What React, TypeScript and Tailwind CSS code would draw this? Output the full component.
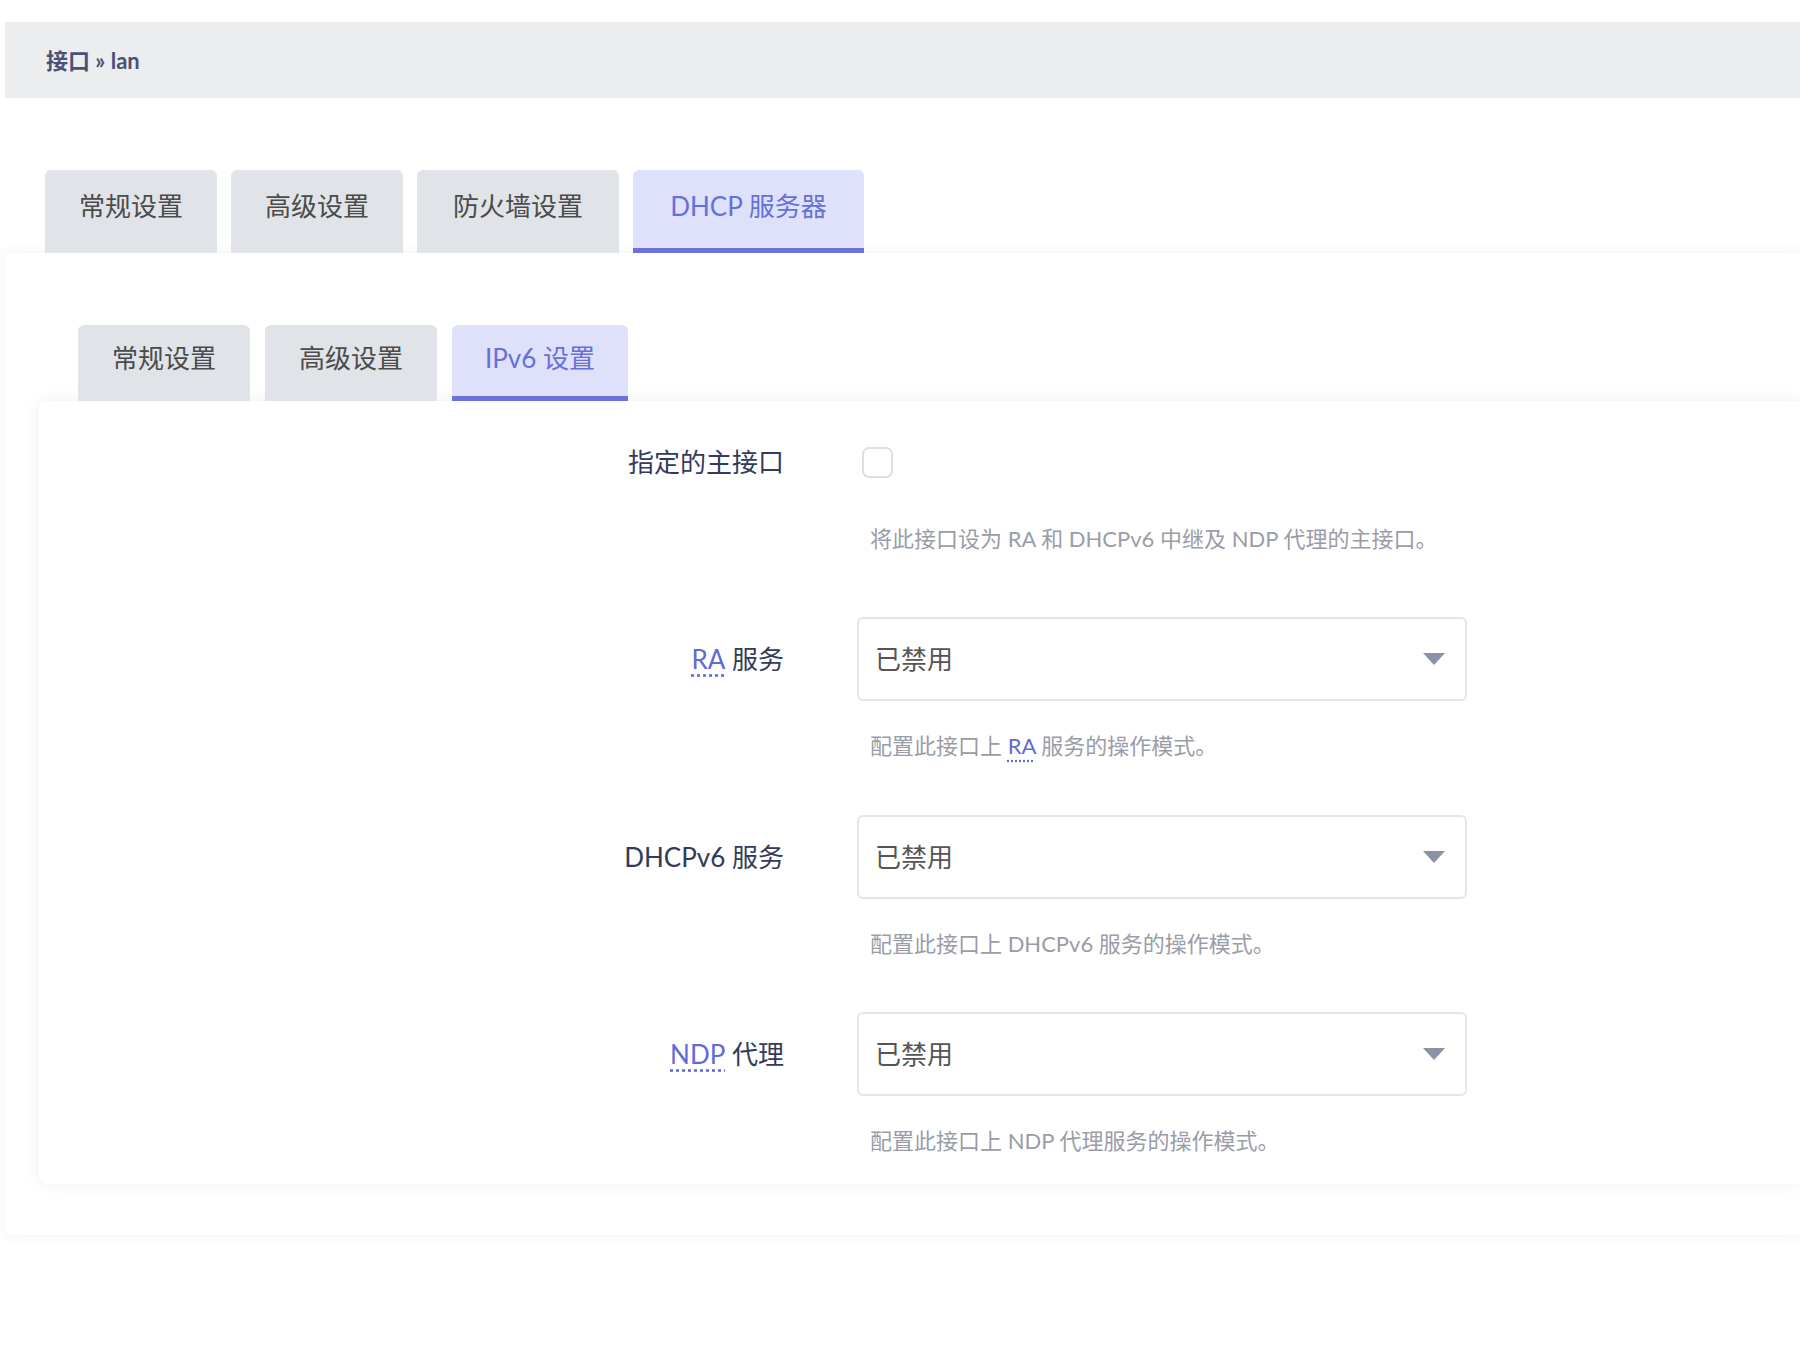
import { ReactNode } from "react"

const font = { fontFamily: '"Lato", "Noto Sans CJK SC", sans-serif' }

function Tab({ label, active, w }: { label: string; active?: boolean; w: string }) {
  return (
    <div
      className={`${w} h-full rounded-t-[6px] flex items-center justify-center text-[26px] ${
        active ? "bg-[#dfe1fb] text-[#6670d9] border-b-[5px] border-[#6b73db] pt-[5px]" : "bg-[#e0e3e8] text-[#4b4b4b]"
      }`}
    >
      <span className="-mt-[10px]">{label}</span>
    </div>
  )
}

function Abbr({ children }: { children: ReactNode }) {
  return (
    <span className="text-[#5f6bd6] underline decoration-dotted decoration-[#5f6bd6] underline-offset-[6px]">
      {children}
    </span>
  )
}

function Select() {
  return (
    <div className="w-[610px] h-[84px] border-2 border-[#e3e5ea] rounded-[6px] flex items-center justify-between pl-[16px] pr-[20px] text-[26px] text-[#555]">
      <span>已禁用</span>
      <svg width="22" height="12" viewBox="0 0 22 12">
        <path d="M0 0 L22 0 L11 12 Z" fill="#8a93a5" />
      </svg>
    </div>
  )
}

function Row({ label, children, desc, h }: { label: ReactNode; children: ReactNode; desc: ReactNode; h: string }) {
  return (
    <div className={`flex ${h}`}>
      <div className="w-[745px] pr-0 text-right text-[26px] text-[#333a5a] h-[84px] flex items-center justify-end">
        {label}
      </div>
      <div className="ml-[73px]">
        <div className="h-[84px] flex items-center">{children}</div>
        <div className="text-[22px] text-[#9a9ca8] pl-[13px] mt-[28px]">{desc}</div>
      </div>
    </div>
  )
}

export default function App() {
  return (
    <div style={font} className="w-[1800px] h-[1362px] bg-white overflow-hidden pt-[22px] pl-[5px]">
      <div className="h-[76px] bg-[#ebedef] flex items-center pl-[41px] text-[22px] font-bold text-[#4a5175]">
        接口 » lan
      </div>
      <div className="h-[83px] mt-[72px] pl-[40px] flex gap-[14px]">
        <Tab label="常规设置" w="w-[172px]" />
        <Tab label="高级设置" w="w-[172px]" />
        <Tab label="防火墙设置" w="w-[202px]" />
        <Tab label="DHCP 服务器" active w="w-[231px]" />
      </div>
      <div className="h-[982px] rounded-l-[8px] bg-white shadow-[0_0_16px_rgba(0,0,0,0.06)] pt-[72px] pl-[34px]">
        <div className="h-[76px] pl-[39px] flex gap-[15px]">
          <Tab label="常规设置" w="w-[172px]" />
          <Tab label="高级设置" w="w-[172px]" />
          <Tab label="IPv6 设置" active w="w-[176px]" />
        </div>
        <div className="h-[783px] rounded-l-[8px] bg-white shadow-[0_0_16px_rgba(0,0,0,0.07)] pt-[6px]">
          <div className="flex h-[210px]">
            <div className="w-[745px] text-right text-[26px] text-[#333a5a] h-[110px] flex items-center justify-end">
              指定的主接口
            </div>
            <div className="ml-[78px]">
              <div className="h-[110px] flex items-center">
                <div className="w-[31px] h-[31px] rounded-[7px] border-2 border-[#dcdfe5]" />
              </div>
              <div className="text-[22px] text-[#9a9ca8] pl-[8px] mt-[5px]">
                将此接口设为 RA 和 DHCPv6 中继及 NDP 代理的主接口。
              </div>
            </div>
          </div>
          <Row h="h-[198px]" label={<><Abbr>RA</Abbr>&nbsp;服务</>} desc={<>配置此接口上 <Abbr>RA</Abbr> 服务的操作模式。</>}>
            <Select />
          </Row>
          <Row h="h-[197px]" label="DHCPv6 服务" desc="配置此接口上 DHCPv6 服务的操作模式。">
            <Select />
          </Row>
          <Row h="h-[170px]" label={<><Abbr>NDP</Abbr>&nbsp;代理</>} desc="配置此接口上 NDP 代理服务的操作模式。">
            <Select />
          </Row>
        </div>
      </div>
    </div>
  )
}
